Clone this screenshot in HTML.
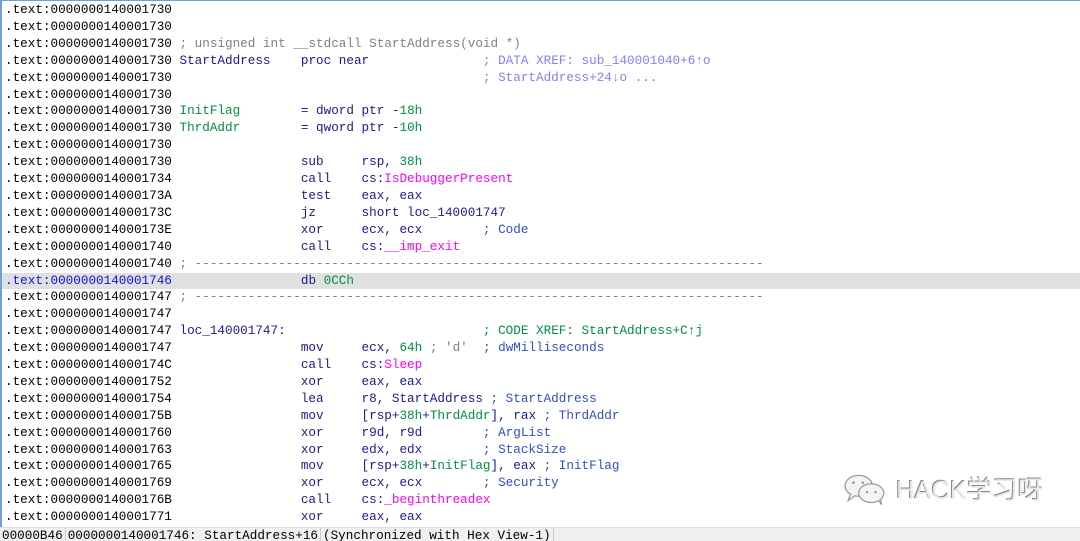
<!DOCTYPE html>
<html><head><meta charset="utf-8"><style>
html,body{margin:0;padding:0;width:1080px;height:540px;overflow:hidden;background:#fff;}
#v{position:absolute;left:0;top:0;width:1080px;height:527px;border-left:2px solid #6fa0d8;border-top:1px solid #6fa0d8;box-sizing:border-box;}
pre{margin:0;position:absolute;left:3px;top:1px;font-family:"Liberation Mono",monospace;font-size:12.65px;line-height:16.9px;color:#000;}
.l{display:block;width:1076px;}
.hl{background:#e0e0e0;margin-left:-3px;padding-left:3px;}
.hl .a{color:#1010e0}
.n{color:#1a1a90}
.g{color:#009040}
.m{color:#ff00ff}
.c{color:#808080}
.x{color:#8080ff}
.k{color:#3050c8}
#sb{position:absolute;left:0;top:527px;width:1080px;height:13px;background:#f0f0f0;border-top:1px solid #ddd;font-family:"Liberation Mono",monospace;font-size:12.65px;line-height:16px;color:#000;white-space:pre;overflow:hidden;}
#sb span{border-right:1px solid #ccc;padding:0 2px;}
#wm{position:absolute;left:843px;top:470px;font-family:"Liberation Sans","Noto Sans CJK SC",sans-serif;font-size:25.5px;color:#e8e8e8;text-shadow:-1px -1px 0 #888,1px 1px 0 #fff;white-space:nowrap;}
</style></head><body>
<div id="v"><pre><span class="l">.text:0000000140001730</span><span class="l">.text:0000000140001730</span><span class="l">.text:0000000140001730 <span class="c">; unsigned int __stdcall StartAddress(void *)</span></span><span class="l">.text:0000000140001730 <span class="n">StartAddress    proc near</span>               <span class="x">; DATA XREF: sub_140001040+6↑o</span></span><span class="l">.text:0000000140001730                                         <span class="x">; StartAddress+24↓o ...</span></span><span class="l">.text:0000000140001730</span><span class="l">.text:0000000140001730 <span class="g">InitFlag</span>        <span class="n">= dword ptr -</span><span class="g">18h</span></span><span class="l">.text:0000000140001730 <span class="g">ThrdAddr</span>        <span class="n">= qword ptr -</span><span class="g">10h</span></span><span class="l">.text:0000000140001730</span><span class="l">.text:0000000140001730                 <span class="n">sub     rsp, </span><span class="g">38h</span></span><span class="l">.text:0000000140001734                 <span class="n">call    cs:</span><span class="m">IsDebuggerPresent</span></span><span class="l">.text:000000014000173A                 <span class="n">test    eax, eax</span></span><span class="l">.text:000000014000173C                 <span class="n">jz      short loc_140001747</span></span><span class="l">.text:000000014000173E                 <span class="n">xor     ecx, ecx</span>        <span class="k">; Code</span></span><span class="l">.text:0000000140001740                 <span class="n">call    cs:</span><span class="m">__imp_exit</span></span><span class="l">.text:0000000140001740 <span class="c">; ---------------------------------------------------------------------------</span></span><span class="l hl"><span class="a">.text:0000000140001746</span>                 <span class="n">db </span><span class="g">0CCh</span></span><span class="l">.text:0000000140001747 <span class="c">; ---------------------------------------------------------------------------</span></span><span class="l">.text:0000000140001747</span><span class="l">.text:0000000140001747 <span class="n">loc_140001747:</span>                          <span class="g">; CODE XREF: StartAddress+C↑j</span></span><span class="l">.text:0000000140001747                 <span class="n">mov     ecx, </span><span class="g">64h</span> <span class="c">; 'd'</span>  <span class="k">; dwMilliseconds</span></span><span class="l">.text:000000014000174C                 <span class="n">call    cs:</span><span class="m">Sleep</span></span><span class="l">.text:0000000140001752                 <span class="n">xor     eax, eax</span></span><span class="l">.text:0000000140001754                 <span class="n">lea     r8, StartAddress</span> <span class="k">; StartAddress</span></span><span class="l">.text:000000014000175B                 <span class="n">mov     [rsp+</span><span class="g">38h</span><span class="n">+</span><span class="g">ThrdAddr</span><span class="n">], rax</span> <span class="k">; ThrdAddr</span></span><span class="l">.text:0000000140001760                 <span class="n">xor     r9d, r9d</span>        <span class="k">; ArgList</span></span><span class="l">.text:0000000140001763                 <span class="n">xor     edx, edx</span>        <span class="k">; StackSize</span></span><span class="l">.text:0000000140001765                 <span class="n">mov     [rsp+</span><span class="g">38h</span><span class="n">+</span><span class="g">InitFlag</span><span class="n">], eax</span> <span class="k">; InitFlag</span></span><span class="l">.text:0000000140001769                 <span class="n">xor     ecx, ecx</span>        <span class="k">; Security</span></span><span class="l">.text:000000014000176B                 <span class="n">call    cs:</span><span class="m">_beginthreadex</span></span><span class="l">.text:0000000140001771                 <span class="n">xor     eax, eax</span></span></pre></div>
<div id="wm"><svg width="46" height="32" viewBox="0 0 44 30" style="vertical-align:-7px"><g fill="#f4f4f4" stroke="#999" stroke-width="1.2"><ellipse cx="15" cy="11" rx="13" ry="10"/><path d="M7 19 L5 25 L12 20"/><ellipse cx="27" cy="18" rx="12" ry="9"/><path d="M34 25 L37 29 L36 24"/></g><g fill="#999"><circle cx="10" cy="8" r="1.3"/><circle cx="19" cy="8" r="1.3"/><circle cx="23" cy="17" r="1.2"/><circle cx="31" cy="17" r="1.2"/></g></svg> HACK学习呀</div>
<div id="sb"><span>00000B46</span><span>0000000140001746: StartAddress+16</span><span>(Synchronized with Hex View-1)</span></div>
</body></html>
